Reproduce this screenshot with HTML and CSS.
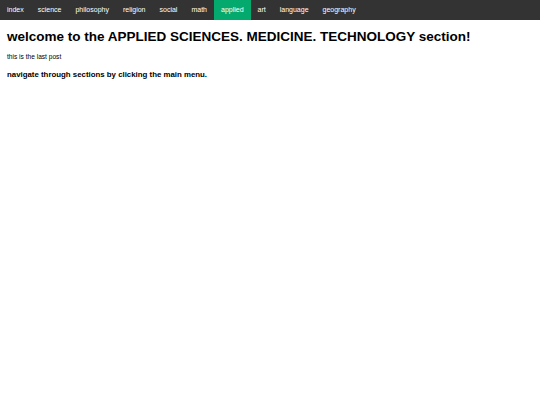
FILE: index.html
```html
<!DOCTYPE html>
<html lang="en">
<head>
    <meta charset="UTF-8">
    <meta name="viewport" content="width=device-width, initial-scale=1.0">
    <title>applied</title>
    <link rel="stylesheet" href="styles.css">
</head>
<body>
    <ul class="topnav">
        <li><a href="#">index</a></li>
        <li><a href="#">science</a></li>
        <li><a href="#">philosophy</a></li>
        <li><a href="#">religion</a></li>
        <li><a href="#">social</a></li>
        <li><a href="#">math</a></li>
        <li><a class="active" href="#">applied</a></li>
        <li><a href="#">art</a></li>
        <li><a href="#">language</a></li>
        <li><a href="#">geography</a></li>
    </ul>

    <div class="content">
        <h1>welcome to the APPLIED SCIENCES. MEDICINE. TECHNOLOGY section!</h1>
        <p>this is the last post</p>
        <h3>navigate through sections by clicking the main menu.</h3>
    </div>
</body>
</html>
```

FILE: styles.css
```css
body {
    margin: 0;
    font-family: "Liberation Sans", Arial, sans-serif;
    color: #000;
    background-color: #fff;
}
.topnav {
    list-style-type: none;
    margin: 0;
    padding: 0;
    display: flex;
    background-color: #333;
}
.topnav a {
    display: block;
    color: #fff;
    text-decoration: none;
    font-size: 7px;
    line-height: 8px;
    padding: 6px 7px;
}
.topnav a.active {
    background-color: #04AA6D;
}
.content {
    padding: 0 7px;
}
h1 {
    font-size: 13.5px;
    line-height: 16px;
    margin: 8.5px 0 8px;
}
p {
    font-size: 6.6px;
    line-height: 8px;
    margin: 0 0 9.5px;
}
h3 {
    font-size: 7.85px;
    line-height: 10px;
    margin: 0;
}
```
